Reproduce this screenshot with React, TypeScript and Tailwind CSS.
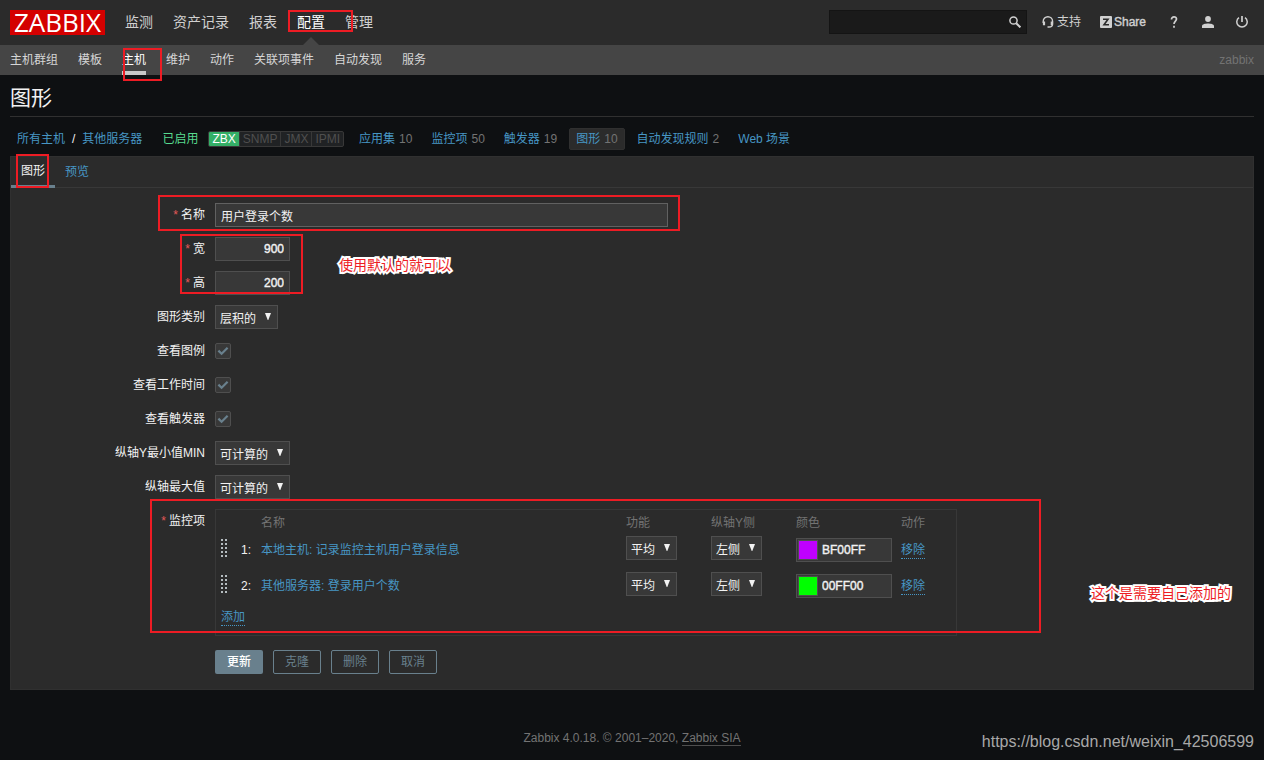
import { useState } from 'react'
import type { ReactNode } from 'react'

const mainMenu = ['监测', '资产记录', '报表', '配置', '管理']
const subMenu = ['主机群组', '模板', '主机', '维护', '动作', '关联项事件', '自动发现', '服务']

const hostLinks = [
  { label: '应用集', count: 10 },
  { label: '监控项', count: 50 },
  { label: '触发器', count: 19 },
  { label: '图形', count: 10, active: true },
  { label: '自动发现规则', count: 2 },
  { label: 'Web 场景' },
]

const graphItems = [
  { id: 1, name: '本地主机: 记录监控主机用户登录信息', color: 'BF00FF', swatch: 'bg-[#bf00ff]' },
  { id: 2, name: '其他服务器: 登录用户个数', color: '00FF00', swatch: 'bg-[#00ff00]' },
]

const outlineButton =
  'h-6 w-12 rounded-xs border border-[#69808d] text-[#69808d] hover:bg-[#383838]'

const numberInput =
  'h-6 w-[75px] border border-[#4f4f4f] bg-[#383838] px-[5px] text-right text-[#f2f2f2] [-webkit-text-stroke:0.4px_#f2f2f2] outline-none'

// Red frame drawn over the page
function Mark({ className }: { className: string }) {
  return <div className={`absolute border-2 border-[#ed1c24] pointer-events-none ${className}`} />
}

function Note({ className, children }: { className: string; children: ReactNode }) {
  return (
    <p
      className={`absolute text-sm leading-5 whitespace-nowrap text-[#ed1c24] [paint-order:stroke_fill] [-webkit-text-stroke:4px_white] pointer-events-none ${className}`}
    >
      {children}
    </p>
  )
}

function Select({ id, label, value, className }: { id?: string; label?: string; value: string; className: string }) {
  return (
    <div className={`relative h-6 ${className}`}>
      <select
        id={id}
        aria-label={label}
        className="block h-6 w-full appearance-none border border-[#4f4f4f] bg-[#383838] pl-1 pt-[3px] text-[#f2f2f2] outline-none"
      >
        <option>{value}</option>
      </select>
      <svg className="absolute right-1.5 top-2 h-2 w-2 pointer-events-none" viewBox="0 0 8 8" fill="#f2f2f2">
        <path d="M1 0h6L4.3 7h-.6z" />
      </svg>
    </div>
  )
}

function Row({ id, label, required, children }: { id: string; label: string; required?: boolean; children: ReactNode }) {
  return (
    <div className="flex gap-2.5">
      <label htmlFor={id} className="w-[194px] shrink-0 text-right leading-6 text-[#f2f2f2]">
        {required && <span className="mr-[3px] text-[#e45959]">*</span>}
        {label}
      </label>
      {children}
    </div>
  )
}

function Check({ id }: { id: string }) {
  const [checked, setChecked] = useState(true)

  return (
    <div className="relative my-1 h-4 w-4">
      <input
        id={id}
        type="checkbox"
        checked={checked}
        onChange={(e) => setChecked(e.target.checked)}
        className="block h-4 w-4 appearance-none rounded-xs border border-[#4f4f4f] bg-[#383838]"
      />
      {checked && (
        <svg className="absolute inset-0 h-4 w-4 pointer-events-none" viewBox="0 0 16 16" fill="none" stroke="#69808d" strokeWidth="2.2">
          <path d="M3.4 7.6l3.2 3.2 6-6" />
        </svg>
      )}
    </div>
  )
}

function Header() {
  return (
    <header className="relative">
      <div className="flex h-[45px] items-start bg-[#2b2b2b] px-2.5 pt-2.5 text-[#d0d0d0]">
        <a href="#" aria-label="ZABBIX" className="flex h-[25px] w-[95px] items-center justify-center bg-[#d40000]">
          <span className="font-['Open_Sans',sans-serif] text-[26px] leading-[25px] text-white">ZABBIX</span>
        </a>
        <nav className="ml-5 flex gap-5 text-sm leading-6">
          {mainMenu.map((item) => (
            <a
              key={item}
              href="#"
              className={item === '配置' ? 'relative h-[35px] text-white' : 'hover:text-white'}
            >
              {item}
              {item === '配置' && (
                <svg className="absolute bottom-0 left-1.5 h-2 w-4" viewBox="0 0 16 8" fill="#454545">
                  <path d="M0 8l8-8 8 8z" />
                </svg>
              )}
            </a>
          ))}
        </nav>
        <div className="ml-auto flex h-6 items-center">
          <form className="relative h-6 w-[198px]" onSubmit={(e) => e.preventDefault()}>
            <input
              type="text"
              aria-label="搜索"
              className="block h-6 w-full border border-[#141414] bg-[#1a1a1a] pl-1 pr-6 outline-none"
            />
            <button type="submit" aria-label="搜索" className="absolute right-1.5 top-1.5">
              <svg className="h-3 w-3" viewBox="0 0 12 12" fill="none" stroke="#d0d0d0">
                <circle cx="4.5" cy="4.5" r="3.6" strokeWidth="1.5" />
                <path d="M7.2 7.2l4.2 4.2" strokeWidth="2" />
              </svg>
            </button>
          </form>
          <a href="#" className="ml-[15px] flex items-center gap-[3px]">
            <svg className="h-3 w-3" viewBox="0 0 12 12" fill="none" stroke="#d0d0d0">
              <path d="M1.2 7V5.4a4.7 4.7 0 0 1 9.400 0V8c0 2-1.600 3-3.600 3H5.500" strokeWidth="1.4" />
              <path d="M2 5.4v3.800M9.800 5.4v3.800" strokeWidth="2.200" />
            </svg>
            支持
          </a>
          <a href="#" className="ml-[19px] flex items-center gap-0.5">
            <svg className="h-3 w-3" viewBox="0 0 12 12">
              <rect width="12" height="12" rx="1" fill="#d0d0d0" />
              <path d="M3 3.200h5L4 8.800h5" fill="none" stroke="#2b2b2b" strokeWidth="1.600" />
            </svg>
            <span className="[-webkit-text-stroke:0.4px_#d0d0d0]">Share</span>
          </a>
          <a href="#" aria-label="帮助" className="ml-5 flex w-4 justify-center">
            <svg className="h-3 w-2" viewBox="0 0 8 12" fill="none" stroke="#d0d0d0" strokeWidth="1.7">
              <path d="M1.5 3.5C1.5 1.8 2.6.9 4 .9s2.500.9 2.500 2.200C6.500 5 4 5.200 4 8" />
              <path d="M4 9.800v1.900" />
            </svg>
          </a>
          <a href="#" aria-label="用户资料" className="ml-5">
            <svg className="h-3 w-3" viewBox="0 0 12 12" fill="#d0d0d0">
              <circle cx="6" cy="3" r="2.900" />
              <path d="M0 12v-2C0 8 3.500 7.400 6 7.400s6 .6 6 2.600v2z" />
            </svg>
          </a>
          <a href="#" aria-label="退出" className="ml-[22px] mr-1.5">
            <svg className="h-3 w-3" viewBox="0 0 12 12" fill="none" stroke="#d0d0d0" strokeWidth="1.500">
              <path d="M3 1.600a5.200 5.200 0 1 0 6 0" />
              <path d="M6 0v6" strokeWidth="1.700" />
            </svg>
          </a>
        </div>
      </div>
      <div className="flex h-[30px] bg-[#454545] px-2.5 leading-[30px] text-[#d6d6d6]">
        <nav className="flex gap-5">
          {subMenu.map((item) => (
            <a
              key={item}
              href="#"
              className={item === '主机' ? 'border-b-4 border-[#c8c8c8] text-white' : 'hover:text-white'}
            >
              {item}
            </a>
          ))}
        </nav>
        <span className="ml-auto text-[#737373]">zabbix</span>
      </div>
      <Mark className="left-[288px] top-[10px] h-[22px] w-[65px]" />
      <Mark className="left-[123px] top-[48px] h-[33px] w-[39px]" />
    </header>
  )
}

function HostNav() {
  return (
    <nav className="flex h-[39px] items-center pl-[7px] pt-1 text-[#4796c4]">
      <a href="#">所有主机</a>
      <span className="mx-[7px] text-[#f2f2f2]">/</span>
      <a href="#">其他服务器</a>
      <span className="ml-5 text-[#59db8f]">已启用</span>
      <div className="ml-2.5 flex h-4 overflow-hidden rounded-xs border border-[#383838] bg-[#202224] leading-[14px] text-[#4f4f4f]">
        <span className="bg-[#34af67] px-[3px] text-white">ZBX</span>
        <span className="border-l border-[#383838] px-[3px]">SNMP</span>
        <span className="border-l border-[#383838] px-[3px]">JMX</span>
        <span className="border-l border-[#383838] px-[3px]">IPMI</span>
      </div>
      <ul className="ml-2 flex items-center gap-[5px]">
        {hostLinks.map((link) => (
          <li
            key={link.label}
            className={
              link.active
                ? 'rounded-xs border border-[#303030] bg-[#2b2b2b] px-1.5 leading-5'
                : 'border border-transparent px-1.5 leading-5'
            }
          >
            <a href="#">{link.label}</a>
            {link.count && <span className="ml-1 text-[#737373]">{link.count}</span>}
          </li>
        ))}
      </ul>
    </nav>
  )
}

function DragIcon() {
  return (
    <svg className="h-[18px] w-2" viewBox="0 0 8 18" fill="#b4bcc0">
      {[0, 4, 8, 12, 16].map((y) => (
        <g key={y}>
          <rect x="0" y={y} width="2" height="2" />
          <rect x="4" y={y} width="2" height="2" />
        </g>
      ))}
    </svg>
  )
}

function ItemsTable() {
  return (
    <div className="w-[742px] border border-[#383838] pb-[5px]">
      <table className="w-full table-fixed text-left">
        <colgroup>
          <col className="w-5" />
          <col className="w-5" />
          <col className="w-[365px]" />
          <col className="w-[85px]" />
          <col className="w-[85px]" />
          <col className="w-[105px]" />
          <col />
        </colgroup>
        <thead>
          <tr className="h-[22px] text-[#737373]">
            <td />
            <td />
            <th className="px-[5px] pt-1 font-normal">名称</th>
            <th className="px-[5px] pt-1 font-normal">功能</th>
            <th className="px-[5px] pt-1 font-normal">纵轴Y侧</th>
            <th className="px-[5px] pt-1 font-normal">颜色</th>
            <th className="px-[5px] pt-1 font-normal">动作</th>
          </tr>
        </thead>
        <tbody>
          {graphItems.map((item) => (
            <tr key={item.id} className="h-9">
              <td className="pl-[5px] pt-[7px] align-top">
                <DragIcon />
              </td>
              <td className="pr-[5px] text-right text-[#f2f2f2]">{item.id}:</td>
              <td className="px-[5px]">
                <a href="#" className="text-[#4796c4]">{item.name}</a>
              </td>
              <td className="px-[5px] pt-1 align-top">
                <Select label="功能" value="平均" className="w-[51px]" />
              </td>
              <td className="px-[5px] pt-1 align-top">
                <Select label="纵轴Y侧" value="左侧" className="w-[51px]" />
              </td>
              <td className="px-[5px]">
                <div className="flex h-6 w-24 border border-[#4f4f4f] bg-[#383838] p-px">
                  <button type="button" aria-label="选择颜色" className={`h-5 w-5 shrink-0 border border-[#4f4f4f] ${item.swatch}`} />
                  <input
                    type="text"
                    aria-label="颜色"
                    defaultValue={item.color}
                    className="w-full min-w-0 pl-1 text-[#f2f2f2] [-webkit-text-stroke:0.4px_#f2f2f2] outline-none"
                  />
                </div>
              </td>
              <td className="px-[5px]">
                <button type="button" className="border-b border-dotted border-[#4796c4] leading-[15px] text-[#4796c4]">
                  移除
                </button>
              </td>
            </tr>
          ))}
          <tr>
            <td colSpan={7} className="h-[26px] px-[5px]">
              <button type="button" className="border-b border-dotted border-[#4796c4] leading-[15px] text-[#4796c4]">
                添加
              </button>
            </td>
          </tr>
        </tbody>
      </table>
    </div>
  )
}

export default function App() {
  return (
    <div className="flex min-h-screen flex-col bg-[#0e1012] font-['Liberation_Sans','Noto_Sans_CJK_SC',sans-serif] text-xs">
      <Header />
      <main className="px-2.5">
        <h1 className="h-[42px] border-b border-[#303030] text-[21px] leading-[45px] text-[#f2f2f2]">图形</h1>
        <HostNav />
        <section className="relative border border-[#303030] bg-[#2b2b2b]">
          <div className="flex h-[31px] border-b border-[#383838] leading-[29px]">
            <button type="button" className="-mb-px border-b-3 border-[#69808d] px-2.5 text-[#f2f2f2]">图形</button>
            <button type="button" className="px-2.5 text-[#4796c4]">预览</button>
          </div>
          <form className="flex flex-col gap-2.5 pb-[15px] pt-[15px]" onSubmit={(e) => e.preventDefault()}>
            <Row id="name" label="名称" required>
              <input
                id="name"
                type="text"
                defaultValue="用户登录个数"
                className="h-6 w-[453px] border border-[#616161] bg-[#383838] px-[5px] text-[#f2f2f2] outline-none"
              />
            </Row>
            <Row id="width" label="宽" required>
              <input id="width" type="text" defaultValue="900" className={numberInput} />
            </Row>
            <Row id="height" label="高" required>
              <input id="height" type="text" defaultValue="200" className={numberInput} />
            </Row>
            <Row id="graphtype" label="图形类别">
              <Select id="graphtype" value="层积的" className="w-[63px]" />
            </Row>
            <Row id="legend" label="查看图例">
              <Check id="legend" />
            </Row>
            <Row id="worktime" label="查看工作时间">
              <Check id="worktime" />
            </Row>
            <Row id="triggers" label="查看触发器">
              <Check id="triggers" />
            </Row>
            <Row id="ymin" label="纵轴Y最小值MIN">
              <Select id="ymin" value="可计算的" className="w-[75px]" />
            </Row>
            <Row id="ymax" label="纵轴最大值">
              <Select id="ymax" value="可计算的" className="w-[75px]" />
            </Row>
            <div className="flex gap-2.5">
              <span className="w-[194px] shrink-0 text-right leading-6 text-[#f2f2f2]">
                <span className="mr-[3px] text-[#e45959]">*</span>
                监控项
              </span>
              <ItemsTable />
            </div>
            <div className="mt-1 flex gap-2.5 pl-[204px]">
              <button type="submit" className="h-6 w-12 rounded-xs bg-[#69808d] font-medium text-white">更新</button>
              <button type="button" className={outlineButton}>克隆</button>
              <button type="button" className={outlineButton}>删除</button>
              <button type="button" className={outlineButton}>取消</button>
            </div>
          </form>
          <Mark className="left-[5px] top-[-3px] h-[34px] w-[33px]" />
          <Mark className="left-[147px] top-[38px] h-[36px] w-[522px]" />
          <Mark className="left-[169px] top-[77px] h-[60px] w-[123px]" />
          <Mark className="left-[139px] top-[342px] h-[134px] w-[891px]" />
          <Note className="left-[328px] top-[98px]">使用默认的就可以</Note>
          <Note className="right-[22px] top-[426px]">这个是需要自己添加的</Note>
        </section>
      </main>
      <footer className="relative mt-10 pb-3.5 text-center leading-4 text-[#737373]">
        Zabbix 4.0.18. © 2001–2020,{' '}
        <a href="#" className="border-b border-[#4f4f4f]">Zabbix SIA</a>
        <span className="absolute right-2.5 top-0 text-base leading-6 text-[#a8a8a8]">
          https://blog.csdn.net/weixin_42506599
        </span>
      </footer>
    </div>
  )
}
